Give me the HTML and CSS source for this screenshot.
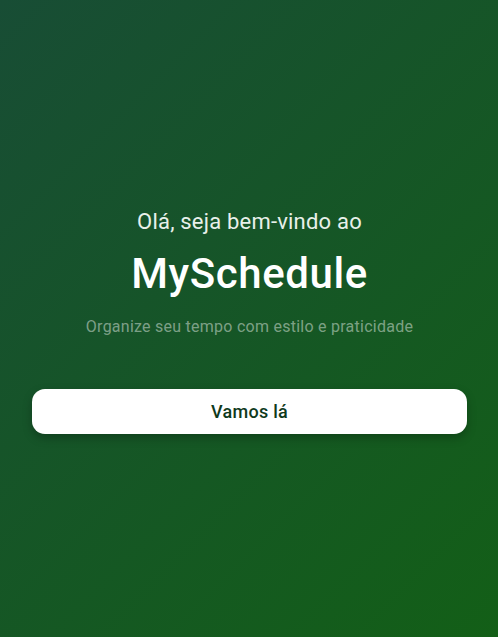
FILE: index.html
```html
<!DOCTYPE html>
<html lang="pt">
<head>
<meta charset="utf-8">
<link rel="stylesheet" href="styles.css">
</head>
<body>
<main class="screen">
  <div class="content">
    <p class="greeting">Olá, seja bem-vindo ao</p>
    <h1 class="brand">MySchedule</h1>
    <p class="tagline">Organize seu tempo com estilo e praticidade</p>
    <button class="cta">Vamos lá</button>
  </div>
</main>
</body>
</html>
```
FILE: styles.css
```css
html, body {
  margin: 0;
  padding: 0;
  height: 100%;
}
body {
  font-family: Roboto, "Liberation Sans", sans-serif;
}
.screen {
  min-height: 100vh;
  box-sizing: border-box;
  background: linear-gradient(135deg, #184d35 0%, #135f17 100%);
  display: flex;
  align-items: center;
  justify-content: center;
  padding: 6px 31px 0 32px;
}
.content {
  width: 100%;
  display: flex;
  flex-direction: column;
  align-items: center;
  text-align: center;
}
.greeting {
  margin: 0;
  font-size: 22px;
  line-height: 26px;
  letter-spacing: 0.2px;
  color: #e8f0ea;
}
.brand {
  margin: 14px 0 0;
  font-size: 42px;
  line-height: 50px;
  font-weight: 500;
  letter-spacing: 0.6px;
  color: #ffffff;
}
.tagline {
  margin: 18px 0 0;
  font-size: 16px;
  line-height: 20px;
  letter-spacing: 0.25px;
  color: rgba(255, 255, 255, 0.45);
}
.cta {
  margin-top: 52px;
  width: 100%;
  height: 45px;
  border: none;
  border-radius: 13px;
  background: #ffffff;
  color: #0f3a1c;
  font-family: Roboto, "Liberation Sans", sans-serif;
  font-size: 18px;
  font-weight: 500;
  letter-spacing: 0.25px;
  box-shadow: 0 4px 10px rgba(0, 0, 0, 0.25);
}
```
